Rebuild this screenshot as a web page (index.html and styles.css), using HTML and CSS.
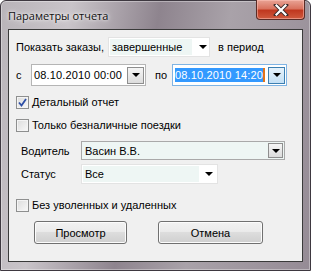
FILE: index.html
```html
<!DOCTYPE html>
<html lang="ru">
<head>
    <meta charset="UTF-8">
    <title>Параметры отчета</title>
    <link rel="stylesheet" href="styles.css">
</head>
<body>
    <div class="window">
        <div class="titlebar">
            <span class="title">Параметры отчета</span>
            <div class="close-btn">
                <svg width="18" height="12" viewBox="0 0 18 12">
                    <path d="M4 1 L14 11 M14 1 L4 11" stroke="#3a2a2a" stroke-width="4" stroke-linecap="square"/>
                    <path d="M4.5 1.5 L13.5 10.5 M13.5 1.5 L4.5 10.5" stroke="#fff" stroke-width="2.2" stroke-linecap="square"/>
                </svg>
            </div>
        </div>

        <div class="client">
            <div class="row row-show">
                <span>Показать заказы,</span>
                <div class="combo combo-flat combo-state">
                    <span class="combo-field">завершенные</span>
                    <span class="arrow"></span>
                </div>
                <span class="period">в период</span>
            </div>

            <div class="row row-dates">
                <span class="lbl-from">с</span>
                <div class="datebox">
                    <span class="date-text">08.10.2010 00:00</span>
                    <span class="drop-btn"><span class="arrow"></span></span>
                </div>
                <span class="lbl-to">по</span>
                <div class="datebox datebox-focus">
                    <span class="date-text"><span class="selected">08.10.2010 14:20</span><span class="caret"></span></span>
                    <span class="drop-btn"><span class="arrow"></span></span>
                </div>
            </div>

            <div class="row row-check first-check">
                <span class="checkbox checked">
                    <svg width="9" height="9" viewBox="0 0 9 9">
                        <path d="M1 4.5 L3.5 7.5 L8 1" fill="none" stroke="#2e4fa6" stroke-width="1.8"/>
                    </svg>
                </span>
                <span>Детальный отчет</span>
            </div>

            <div class="row row-check second-check">
                <span class="checkbox"></span>
                <span>Только безналичные поездки</span>
            </div>

            <div class="row row-driver">
                <span class="field-label">Водитель</span>
                <div class="combo combo-box combo-driver">
                    <span class="combo-field">Васин В.В.</span>
                    <span class="drop-btn"><span class="arrow"></span></span>
                </div>
            </div>

            <div class="row row-status">
                <span class="field-label">Статус</span>
                <div class="combo combo-flat combo-status">
                    <span class="combo-field">Все</span>
                    <span class="arrow"></span>
                </div>
            </div>

            <div class="row row-check third-check">
                <span class="checkbox"></span>
                <span>Без уволенных и удаленных</span>
            </div>

            <div class="buttons">
                <button class="btn btn-view">Просмотр</button>
                <button class="btn btn-cancel">Отмена</button>
            </div>
        </div>
    </div>
</body>
</html>
```

FILE: styles.css
```css
body {
    margin: 0;
    padding: 0;
    font-family: 'Liberation Sans', Arial, sans-serif;
    font-size: 11px;
    color: #000;
    background: #fff;
}
.window {
    width: 311px;
    height: 271px;
    box-sizing: border-box;
    padding: 0 7px 8px 7px;
    border: 1px solid #3e3840;
    border-radius: 6px 6px 0 0;
    background: linear-gradient(100deg, #b9b4b9 0%, #c9c4c9 20%, #8e848e 45%, #a9a2a9 65%, #958b95 100%);
    box-shadow: inset 0 0 0 1px rgba(255, 255, 255, 0.35);
}
.titlebar {
    height: 28px;
    display: flex;
    align-items: flex-start;
    justify-content: space-between;
}
.title {
    margin-top: 7px;
    font-family: 'Open Sans', 'DejaVu Sans', sans-serif;
    font-size: 11px;
    color: #111;
    text-shadow: 0 0 6px rgba(255, 255, 255, 0.9), 0 0 3px rgba(255, 255, 255, 0.9);
}
.close-btn {
    width: 47px;
    height: 19px;
    margin-right: -2px;
    margin-top: -1px;
    border: 1px solid #5a2c26;
    border-top: none;
    border-radius: 0 0 4px 4px;
    background: linear-gradient(#e9a496 0%, #d9735f 45%, #c0381f 55%, #cf5a3e 100%);
    box-shadow: inset 0 0 0 1px rgba(255, 200, 190, 0.5);
    display: flex;
    align-items: center;
    justify-content: center;
}
.client {
    height: 233px;
    box-sizing: border-box;
    border: 1px solid #3a3a3a;
    background: #f0f0f0;
    padding: 0 0 0 7px;
}
.row {
    display: flex;
    align-items: center;
}
.row-show {
    margin-top: 7px;
    height: 20px;
}
.combo {
    display: flex;
    align-items: center;
    box-sizing: border-box;
}
.combo-flat {
    height: 20px;
    background: #fff;
    border: 1px solid #e3e3e3;
    padding: 1px;
}
.combo-flat .combo-field {
    height: 100%;
    display: flex;
    align-items: center;
    background: #eef6f4;
    padding-left: 2px;
}
.combo-state {
    width: 102px;
    margin-left: 4px;
}
.combo-state .combo-field {
    width: 80px;
}
.combo-flat .arrow {
    margin-left: 7px;
}
.arrow {
    width: 0;
    height: 0;
    border-left: 4px solid transparent;
    border-right: 4px solid transparent;
    border-top: 4px solid #000;
}
.period {
    margin-left: 8px;
}
.row-dates {
    margin-top: 7px;
    height: 22px;
}
.lbl-from {
    width: 15px;
}
.lbl-to {
    margin-left: 9px;
    width: 17px;
}
.datebox {
    height: 22px;
    width: 115px;
    box-sizing: border-box;
    border: 1px solid #b5b5b5;
    background: #fff;
    display: flex;
    align-items: center;
    padding: 0 1px 0 2px;
    justify-content: space-between;
}
.date-text {
    display: flex;
    align-items: center;
    font-size: 11px;
    letter-spacing: 0.15px;
}
.drop-btn {
    width: 15px;
    height: 15px;
    border: 1px solid #8e8e8e;
    background: linear-gradient(#f5f5f5, #dcdcdc);
    display: flex;
    align-items: center;
    justify-content: center;
}
.datebox-focus {
    border-color: #7fb4e4;
}
.datebox-focus .selected {
    background: #3399ff;
    color: #fff;
    padding: 1px 0;
}
.caret {
    width: 2px;
    height: 14px;
    background: #e0751c;
}
.datebox-focus .drop-btn {
    border-color: #3c7fb1;
    background: linear-gradient(#e6f2fb, #c4e0f5);
}
.row-check {
    height: 14px;
}
.first-check {
    margin-top: 9px;
}
.second-check {
    margin-top: 9px;
}
.third-check {
    margin-top: 14px;
}
.checkbox {
    width: 11px;
    height: 11px;
    border: 1px solid #8e8f8f;
    background: linear-gradient(135deg, #dcdcdc, #f8f8f8);
    box-shadow: inset 0 0 0 1px #f4f4f4;
    margin-right: 3px;
    display: flex;
    align-items: center;
    justify-content: center;
}
.field-label {
    width: 60px;
    padding-left: 5px;
}
.row-driver {
    margin-top: 9px;
    height: 19px;
}
.combo-box {
    height: 19px;
    width: 204px;
    border: 1px solid #a9a9a9;
    background: #eef6f4;
    justify-content: space-between;
    padding: 0 1px 0 3px;
}
.combo-box .drop-btn {
    width: 13px;
    height: 13px;
}
.row-status {
    margin-top: 4px;
    height: 20px;
}
.combo-status {
    width: 137px;
}
.combo-status .combo-field {
    width: 114px;
}
.combo-status .arrow {
    margin-left: 6px;
}
.buttons {
    display: flex;
    margin-top: 9px;
    padding-left: 18px;
}
.btn {
    height: 23px;
    font-family: 'Liberation Sans', Arial, sans-serif;
    font-size: 11px;
    color: #000;
    border: 1px solid #707070;
    border-radius: 3px;
    background: linear-gradient(#f2f2f2 0%, #ebebeb 45%, #dddddd 50%, #cfcfcf 100%);
    box-shadow: inset 0 0 0 1px #fcfcfc;
    padding: 0;
}
.btn-view {
    width: 93px;
}
.btn-cancel {
    width: 105px;
    margin-left: 31px;
}
```
